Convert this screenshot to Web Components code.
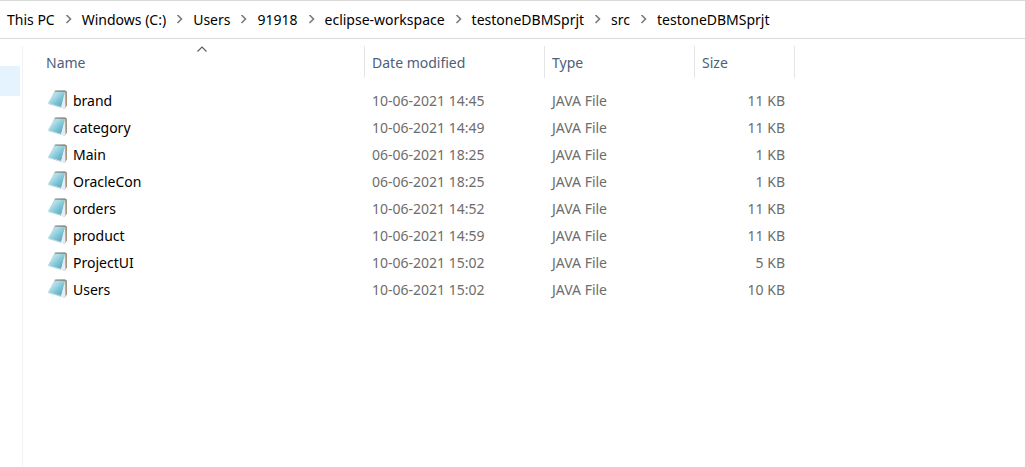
<!DOCTYPE html>
<html lang="en">
<head>
<meta charset="utf-8">
<title>testoneDBMSprjt</title>
<style>
  html, body { height: 100%; }
  body { margin: 0; background: #fff; font: 14px/20px "Noto Sans", sans-serif; color: #000; }
</style>
</head>
<body>
<explorer-window>
  <address-bar slot="address">
    <path-crumb href="#pc">This PC</path-crumb>
    <path-crumb href="#c">Windows (C:)</path-crumb>
    <path-crumb href="#users">Users</path-crumb>
    <path-crumb href="#91918">91918</path-crumb>
    <path-crumb href="#workspace">eclipse-workspace</path-crumb>
    <path-crumb href="#project">testoneDBMSprjt</path-crumb>
    <path-crumb href="#src">src</path-crumb>
    <path-crumb href="#package">testoneDBMSprjt</path-crumb>
  </address-bar>
  <nav-pane slot="nav"></nav-pane>
  <file-list></file-list>
</explorer-window>

<script>
function define(name, html, setup) {
  const template = document.createElement("template");
  template.innerHTML = html;
  customElements.define(name, class extends HTMLElement {
    constructor() {
      super();
      this.attachShadow({ mode: "open" }).append(template.content.cloneNode(true));
    }
    connectedCallback() {
      if (setup) setup(this, this.shadowRoot);
    }
  });
}

define("explorer-window", `
  <style>
    :host { display: flex; flex-direction: column; min-height: 100%; }
    main { display: flex; flex: 1; padding-top: 7px; }
    .files { flex: 1; min-width: 0; }
  </style>
  <slot name="address"></slot>
  <main>
    <slot name="nav"></slot>
    <div class="files"><slot></slot></div>
  </main>`);

define("address-bar", `
  <style>
    :host { display: block; border: 1px solid #d9d9d9; border-width: 1px 0; }
    nav { display: flex; align-items: center; height: 37px; padding-left: 7px; }
  </style>
  <nav aria-label="Path"><slot></slot></nav>`);

define("path-crumb", `
  <style>
    :host { display: flex; align-items: center; white-space: nowrap; }
    a { color: #000; text-decoration: none; }
    svg { width: 27px; height: 10px; }
    :host(:last-child) svg { display: none; }
  </style>
  <a><slot></slot></a>
  <svg viewBox="0 0 27 10" fill="none" stroke="#7b7b7b" stroke-width="1.6" aria-hidden="true"><path d="M11.5 0 15.5 4 11.5 8"/></svg>`,
  (host, root) => { root.querySelector("a").href = host.getAttribute("href"); });

define("nav-pane", `
  <style>
    :host { display: block; width: 22px; padding-top: 20px; border-right: 1px solid #f2f2f2; }
    div { height: 30px; margin-right: 2px; background: #e5f3ff; }
  </style>
  <div></div>`);

define("file-icon", `
  <style>
    :host { display: block; width: 20px; height: 20px; }
    svg { display: block; width: 20px; height: 20px; }
  </style>
  <svg viewBox="0 0 20 20" aria-hidden="true">
    <defs>
      <linearGradient id="cover" x1="0" y1="0" x2="1" y2="1">
        <stop offset="0" stop-color="#8fb4bd"/><stop offset=".3" stop-color="#b4e0ea"/>
        <stop offset=".65" stop-color="#74bfd1"/><stop offset="1" stop-color="#4c9fb6"/>
      </linearGradient>
    </defs>
    <path d="M8 .8 17.4.6 19 1.8 19 15.6 16.8 18.4 14 18Z" fill="#9a8a72"/>
    <path d="M17.2 2 18.3 2.6V15.5L17 17.5Z" fill="#c0ae8d"/>
    <path d="M7 1.4 16.8 1.8 17.2 18.4 13 17.8.4 13.8Z" fill="#e3ebf2"/>
    <path d="M6.6 1.2 17 1.8 13.2 17 .1 13Z" fill="url(#cover)"/>
    <path d="M.1 13 13.2 17V18L.3 14.1Z" fill="#b7d5dd"/>
    <path d="M16.8 4 17.2 18.3 13 17.8Z" fill="#e8edf5"/>
    <path d="M6.7 1.1 17 1.2" stroke="#768584" stroke-width="1" fill="none"/>
  </svg>`);

const files = [
  ["brand", "10-06-2021 14:45", "11 KB"],
  ["category", "10-06-2021 14:49", "11 KB"],
  ["Main", "06-06-2021 18:25", "1 KB"],
  ["OracleCon", "06-06-2021 18:25", "1 KB"],
  ["orders", "10-06-2021 14:52", "11 KB"],
  ["product", "10-06-2021 14:59", "11 KB"],
  ["ProjectUI", "10-06-2021 15:02", "5 KB"],
  ["Users", "10-06-2021 15:02", "10 KB"]
];

define("file-list", `
  <style>
    :host { display: block; }
    table { width: 772px; table-layout: fixed; border-collapse: separate; border-spacing: 0; }
    .name { width: 342px; } .date { width: 180px; } .type { width: 150px; } .size { width: 100px; }
    th { position: relative; height: 32px; padding: 0; border-right: 1px solid #e5e5e5; text-align: left; }
    button { display: block; width: 100%; height: 32px; padding: 2px 0 0 7px; border: 0; background: none; font: inherit; font-weight: 400; color: #4c607a; text-align: left; }
    th:first-child button { padding-left: 23px; }
    .sort { position: absolute; top: 0; left: 50%; width: 10px; height: 6px; margin-left: 3px; }
    tbody::before { content: ""; display: table-row; height: 9px; }
    td { height: 27px; padding: 0 0 0 7px; color: #6d6d6d; white-space: nowrap; }
    td:first-child { padding-left: 25px; color: #000; }
    td:last-child { padding: 0 10px 0 0; text-align: right; }
    .file { display: flex; align-items: center; gap: 5px; }
    file-icon { padding-bottom: 2px; }
  </style>
  <table>
    <colgroup><col class="name"><col class="date"><col class="type"><col class="size"></colgroup>
    <thead><tr>
      <th aria-sort="ascending"><button>Name</button><svg class="sort" viewBox="0 0 10 6" fill="none" stroke="#5a5a5a" stroke-width="1.1" aria-hidden="true"><path d="M.5 5.5 5 1 9.5 5.5"/></svg></th>
      <th><button>Date modified</button></th>
      <th><button>Type</button></th>
      <th><button>Size</button></th>
    </tr></thead>
    <tbody></tbody>
  </table>`,
  (host, root) => {
    const body = root.querySelector("tbody");
    body.innerHTML = files.map(([name, date, size]) => `<tr>
      <td><div class="file"><file-icon></file-icon><span>${name}</span></div></td>
      <td>${date}</td><td>JAVA File</td><td>${size}</td></tr>`).join("");
  });
</script>
</body>
</html>
